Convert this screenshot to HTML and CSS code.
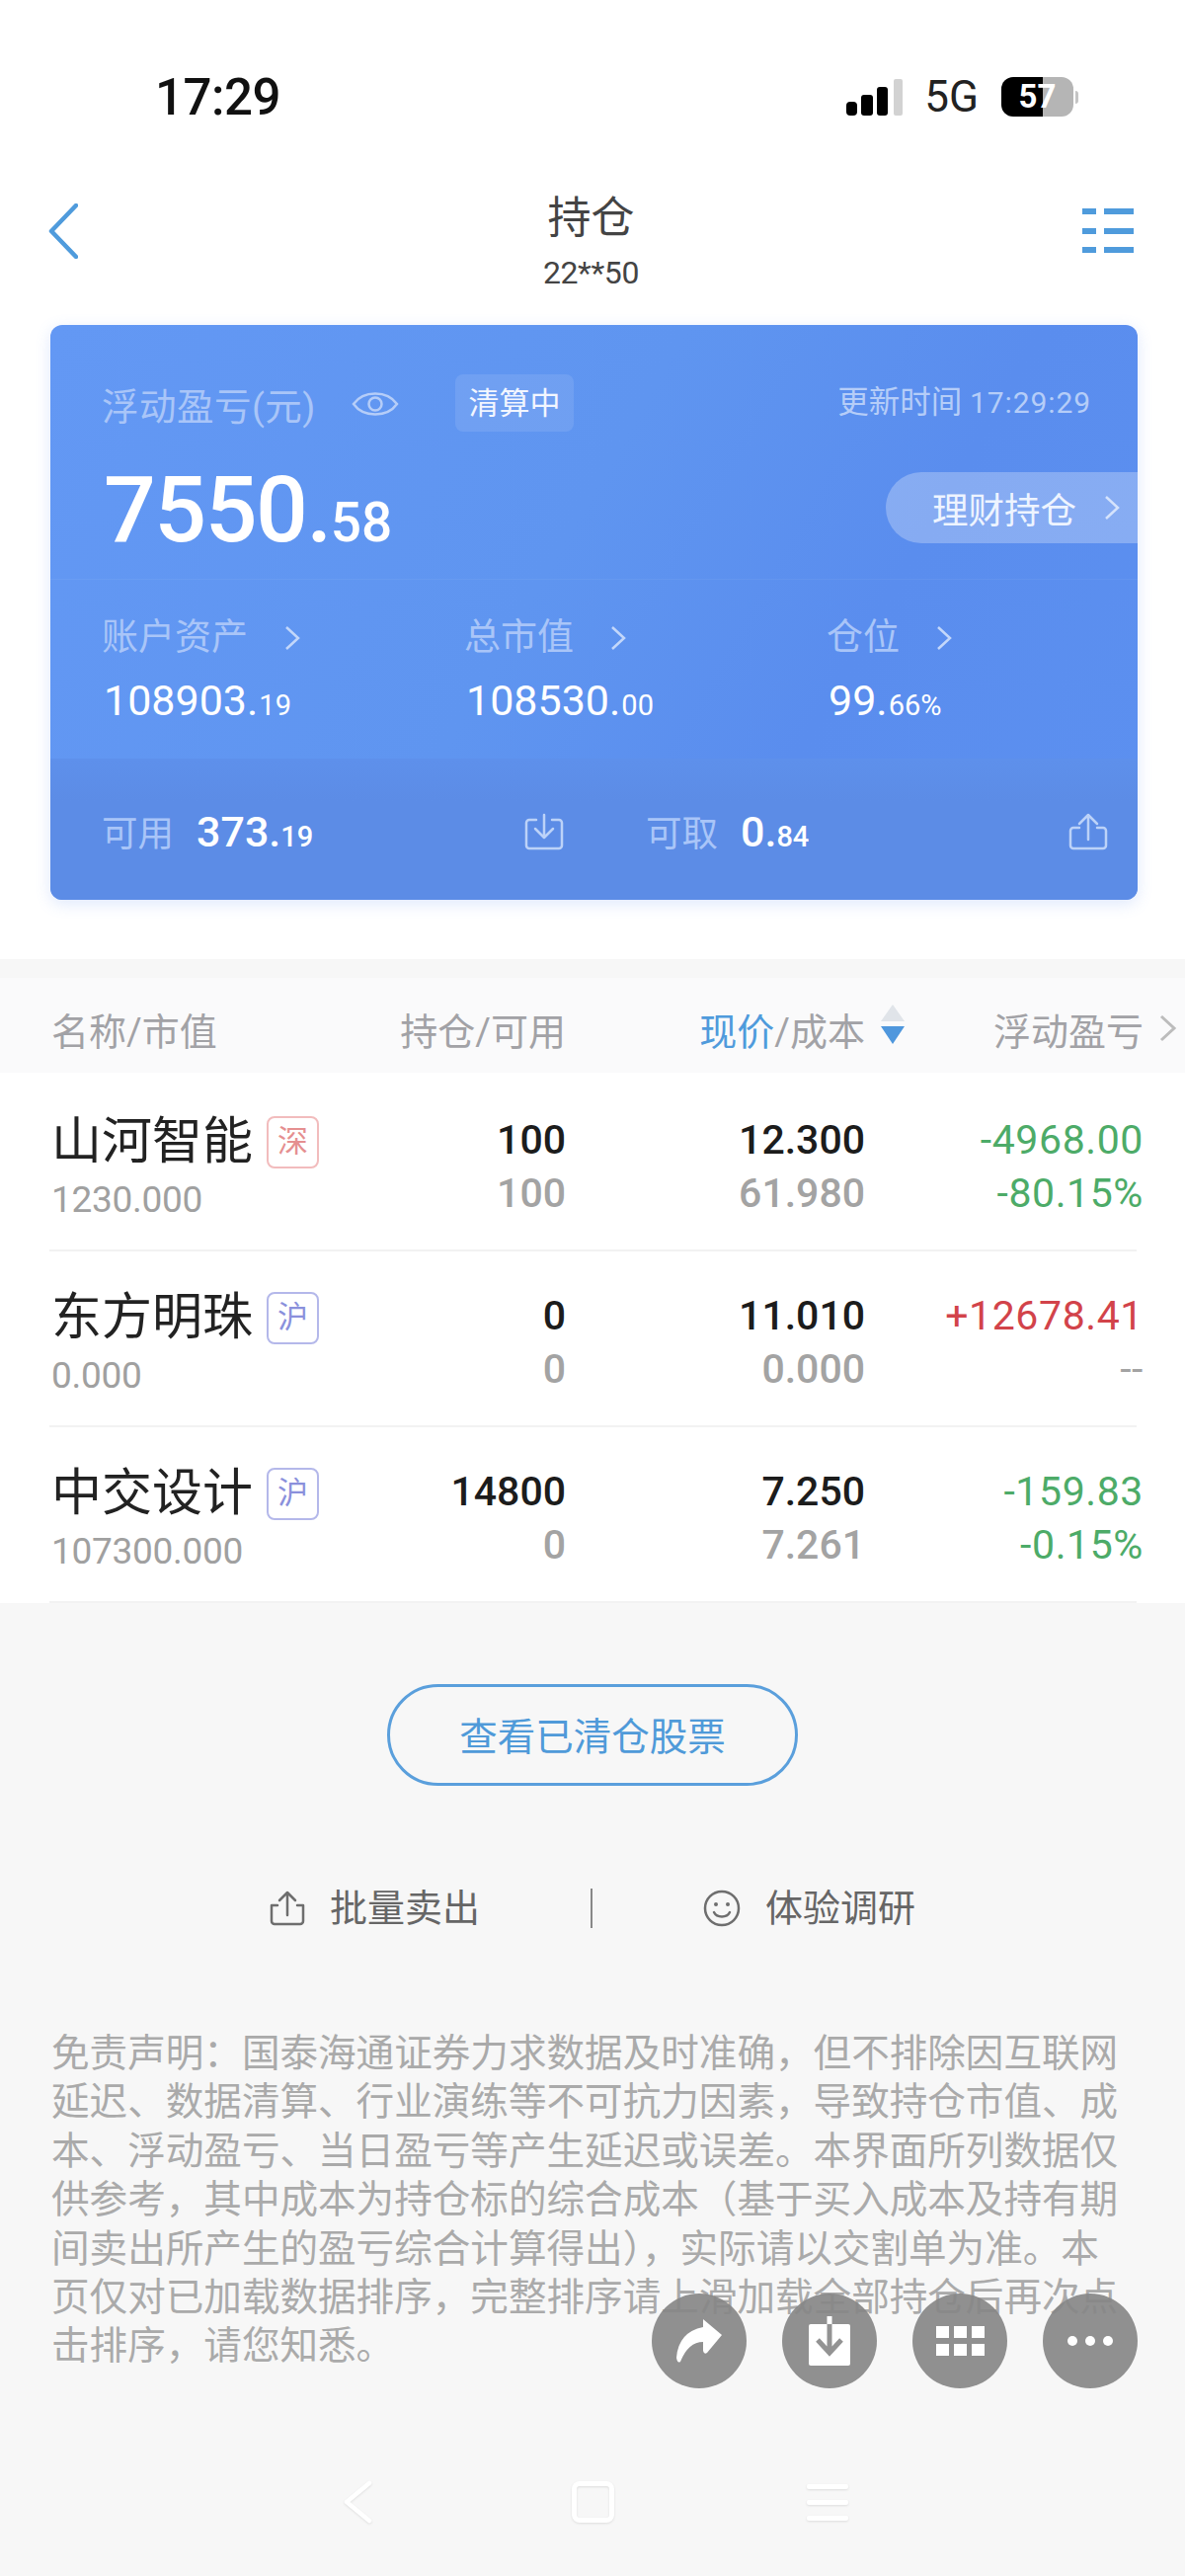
FILE: index.html
```html
<!DOCTYPE html>
<html lang="zh-CN">
<head>
<meta charset="utf-8">
<title>持仓</title>
<link rel="stylesheet" href="styles.css">
</head>
<body>
<header class="status">
  <span class="clock">17:29</span>
  <div class="status-right">
    <svg class="signal" viewBox="0 0 57 37" width="57" height="37"><rect x="0" y="23" width="11" height="14" rx="4" fill="#000"/><rect x="15" y="16" width="12" height="21" rx="3" fill="#000"/><rect x="31" y="8" width="11" height="29" rx="3" fill="#000"/><rect x="48" y="0" width="9" height="37" rx="2" fill="#d2d2d2"/></svg>
    <span class="net">5G</span>
    <div class="battery"><span class="battery-num">57</span></div>
    <span class="battery-nub"></span>
  </div>
</header>

<nav class="navbar">
  <svg class="nav-back" viewBox="0 0 30 56" width="30" height="56"><polyline points="28,2 3,28 28,54" fill="none" stroke="#4f9bdc" stroke-width="4.5" stroke-linecap="round" stroke-linejoin="round"/></svg>
  <div class="nav-title">
    <div class="title">持仓</div>
    <div class="account">22**50</div>
  </div>
  <svg class="nav-menu" viewBox="0 0 52 46" width="52" height="46"><g fill="#4f9bdc"><rect x="0" y="0" width="14" height="6"/><rect x="22" y="0" width="30" height="6"/><rect x="0" y="20" width="14" height="6"/><rect x="22" y="20" width="30" height="6"/><rect x="0" y="39" width="14" height="6"/><rect x="22" y="39" width="30" height="6"/></g></svg>
</nav>

<section class="card">
  <div class="card-main">
    <div class="card-top">
      <span class="label">浮动盈亏(元)</span>
      <svg class="eye" viewBox="0 0 48 34" width="48" height="34"><path d="M2 17C12 3 36 3 46 17C36 31 12 31 2 17Z" fill="none" stroke="#b5cdf8" stroke-width="2.5"/><circle cx="24" cy="17" r="6.5" fill="none" stroke="#b5cdf8" stroke-width="2.5"/></svg>
      <span class="clearing">清算中</span>
      <span class="updated">更新时间 <span class="updated-time">17:29:29</span></span>
    </div>
    <div class="card-hero">
      <div class="hero-num">7550.<small>58</small></div>
      <div class="wealth">理财持仓
        <svg viewBox="0 0 16 26" width="16" height="26"><polyline points="2,2 14,13 2,24" fill="none" stroke="#d5e3fc" stroke-width="2.5"/></svg>
      </div>
    </div>
    <div class="stats">
      <div class="stat">
        <div class="stat-label">账户资产<svg viewBox="0 0 16 26" width="16" height="26"><polyline points="2,2 14,13 2,24" fill="none" stroke="#c3d7fa" stroke-width="2.5"/></svg></div>
        <div class="stat-value">108903.<small>19</small></div>
      </div>
      <div class="stat">
        <div class="stat-label">总市值<svg viewBox="0 0 16 26" width="16" height="26"><polyline points="2,2 14,13 2,24" fill="none" stroke="#c3d7fa" stroke-width="2.5"/></svg></div>
        <div class="stat-value">108530.<small>00</small></div>
      </div>
      <div class="stat">
        <div class="stat-label">仓位<svg viewBox="0 0 16 26" width="16" height="26"><polyline points="2,2 14,13 2,24" fill="none" stroke="#c3d7fa" stroke-width="2.5"/></svg></div>
        <div class="stat-value">99.<small>66%</small></div>
      </div>
    </div>
  </div>
  <div class="card-foot">
    <div class="foot-half">
      <div class="foot-item"><span class="foot-label">可用</span><span class="foot-value">373.<small>19</small></span></div>
      <svg viewBox="0 0 40 38" width="40" height="38"><g fill="none" stroke="#bcd2f8" stroke-width="2.5" stroke-linecap="round" stroke-linejoin="round"><path d="M12 7H5a3 3 0 0 0-3 3v23a3 3 0 0 0 3 3h30a3 3 0 0 0 3-3V10a3 3 0 0 0-3-3h-7"/><path d="M20 2v22M11 16l9 9 9-9"/></g></svg>
    </div>
    <div class="foot-half">
      <div class="foot-item"><span class="foot-label">可取</span><span class="foot-value">0.<small>84</small></span></div>
      <svg viewBox="0 0 40 38" width="40" height="38"><g fill="none" stroke="#bcd2f8" stroke-width="2.5" stroke-linecap="round" stroke-linejoin="round"><path d="M11 15H5a3 3 0 0 0-3 3v15a3 3 0 0 0 3 3h30a3 3 0 0 0 3-3V18a3 3 0 0 0-3-3h-6"/><path d="M20 27V3M11 11l9-9 9 9"/></g></svg>
    </div>
  </div>
</section>

<div class="band"></div>

<section class="table">
  <div class="thead grid">
    <span>名称/市值</span>
    <span class="num">持仓/可用</span>
    <span class="num th-sort"><span class="th-active">现价</span>/成本
      <svg viewBox="0 0 24 40" width="24" height="40"><path d="M12 0L24 17H0Z" fill="#e0e4e9"/><path d="M12 40L24 22H0Z" fill="#4f97dd"/></svg>
    </span>
    <span class="num">浮动盈亏</span>
    <svg class="th-more" viewBox="0 0 18 28" width="18" height="28"><polyline points="2,2 15,14 2,26" fill="none" stroke="#bcbcbc" stroke-width="3"/></svg>
  </div>

  <div class="row grid">
    <div>
      <div class="name">山河智能<span class="badge badge-sz">深</span></div>
      <div class="sub">1230.000</div>
    </div>
    <div class="cell"><span class="v1">100</span><span class="v2">100</span></div>
    <div class="cell"><span class="v1">12.300</span><span class="v2">61.980</span></div>
    <div class="cell pnl pnl-down"><span>-4968.00</span><span>-80.15%</span></div>
  </div>

  <div class="row grid">
    <div>
      <div class="name">东方明珠<span class="badge badge-sh">沪</span></div>
      <div class="sub">0.000</div>
    </div>
    <div class="cell"><span class="v1">0</span><span class="v2">0</span></div>
    <div class="cell"><span class="v1">11.010</span><span class="v2">0.000</span></div>
    <div class="cell pnl"><span class="pnl-up">+12678.41</span><span class="v2">--</span></div>
  </div>

  <div class="row grid">
    <div>
      <div class="name">中交设计<span class="badge badge-sh">沪</span></div>
      <div class="sub">107300.000</div>
    </div>
    <div class="cell"><span class="v1">14800</span><span class="v2">0</span></div>
    <div class="cell"><span class="v1">7.250</span><span class="v2">7.261</span></div>
    <div class="cell pnl pnl-down"><span>-159.83</span><span>-0.15%</span></div>
  </div>
</section>

<section class="lower">
  <div class="cleared">查看已清仓股票</div>
  <div class="actions">
    <div class="action">
      <svg viewBox="0 0 36 36" width="36" height="36"><g fill="none" stroke="#6e6e6e" stroke-width="2.5" stroke-linecap="round" stroke-linejoin="round"><path d="M8 15H2v16a3 3 0 0 0 3 3h26a3 3 0 0 0 3-3V15h-6"/><path d="M18 25V2M10 10l8-8 8 8"/></g></svg>
      <span>批量卖出</span>
    </div>
    <span class="divider"></span>
    <div class="action">
      <svg viewBox="0 0 38 38" width="38" height="38"><g fill="none" stroke="#6e6e6e" stroke-width="2.5" stroke-linecap="round"><circle cx="19" cy="19" r="17"/><path d="M11 23c3 6 13 6 16 0"/></g><circle cx="13" cy="15" r="2" fill="#6e6e6e"/><circle cx="25" cy="15" r="2" fill="#6e6e6e"/></svg>
      <span>体验调研</span>
    </div>
  </div>
  <p class="disclaimer">免责声明：国泰海通证券力求数据及时准确，但不排除因互联网延迟、数据清算、行业演练等不可抗力因素，导致持仓市值、成本、浮动盈亏、当日盈亏等产生延迟或误差。本界面所列数据仅供参考，其中成本为持仓标的综合成本（基于买入成本及持有期间卖出所产生的盈亏综合计算得出），实际请以交割单为准。本页仅对已加载数据排序，完整排序请上滑加载全部持仓后再次点击排序，请您知悉。</p>
  <div class="sysnav">
    <div class="sysnav-cell"><svg viewBox="0 0 30 44" width="30" height="44"><polyline points="27,3 4,22 27,41" fill="none" stroke="#fff" stroke-width="4.5" stroke-linecap="round" stroke-linejoin="round"/></svg></div>
    <div class="sysnav-cell"><span class="sys-square"></span></div>
    <div class="sysnav-cell"><svg viewBox="0 0 42 40" width="42" height="40"><g fill="#fff"><rect x="0" y="2" width="42" height="5" rx="2"/><rect x="0" y="18" width="42" height="5" rx="2"/><rect x="0" y="34" width="42" height="5" rx="2"/></g></svg></div>
  </div>
</section>

<div class="float-bar">
  <div class="float-btn"><svg viewBox="0 0 46 46" width="46" height="46"><path d="M27 1L46 17L31 35Q28 37 27 33L27 24Q12 24 4 44Q1 46 0 40Q2 14 27 9Z" fill="#fff"/></svg></div>
  <div class="float-btn"><svg viewBox="0 0 42 50" width="42" height="50"><rect x="0" y="8" width="42" height="42" rx="2" fill="#fff"/><rect x="18.500" y="0" width="5" height="8" fill="#fff"/><path d="M21 8V36M9 24L21 37L33 24" fill="none" stroke="#939393" stroke-width="5"/></svg></div>
  <div class="float-btn"><svg viewBox="0 0 49 30" width="49" height="30"><g fill="#fff"><rect x="0" y="0" width="13" height="12"/><rect x="18" y="0" width="13" height="12"/><rect x="36" y="0" width="13" height="12"/><rect x="0" y="18" width="13" height="12"/><rect x="18" y="18" width="13" height="12"/><rect x="36" y="18" width="13" height="12"/></g></svg></div>
  <div class="float-btn"><svg viewBox="0 0 46 10" width="46" height="10"><g fill="#fff"><circle cx="5" cy="5" r="5"/><circle cx="23" cy="5" r="5"/><circle cx="41" cy="5" r="5"/></g></svg></div>
</div>
</body>
</html>
```
FILE: styles.css
```css
* { box-sizing: border-box; }
html, body { margin: 0; padding: 0; }
body {
  position: relative;
  width: 1200px;
  height: 2608px;
  overflow: hidden;
  background: #fff;
  font-family: Roboto, "Noto Sans CJK SC", sans-serif;
  color: #222;
}
small { font-size: inherit; }

/* status bar */
.status {
  height: 196px;
  display: flex;
  justify-content: space-between;
  align-items: center;
  padding: 0 108px 0 157px;
}
.clock { font-size: 51px; font-weight: 500; color: #111; letter-spacing: -0.5px; }
.status-right { display: flex; align-items: center; }
.signal { margin-right: 22px; }
.net { font-size: 44px; color: #222; margin-right: 23px; }
.battery {
  width: 73px;
  height: 40px;
  border-radius: 12px;
  background: linear-gradient(90deg, #000 0, #000 57%, #b5b5b5 57%, #b5b5b5 100%);
  display: flex;
  align-items: center;
  justify-content: center;
}
.battery-num { font-size: 33px; font-weight: 700; color: #fff; line-height: 40px; }
.battery-nub { width: 3px; height: 13px; margin-left: 2px; border-radius: 0 3px 3px 0; background: #c4c4c4; }

/* nav */
.navbar {
  height: 133px;
  display: grid;
  grid-template-columns: 1fr auto 1fr;
  padding: 0 52px 0 49px;
  align-items: start;
}
.nav-back { margin-top: 10px; }
.nav-menu { justify-self: end; margin-top: 15px; }
.nav-title { text-align: center; }
.title { font-size: 44px; line-height: 50px; color: #444; }
.account { font-size: 32px; line-height: 34px; margin-top: 13px; color: #444; letter-spacing: -.4px; }

/* card */
.card {
  margin: 0 48px 0 51px;
  height: 582px;
  border-radius: 12px;
  background: linear-gradient(120deg, #6398f4 0%, #5f95f0 45%, #5a8dee 70%, #5c90f0 100%);
  box-shadow: 0 4px 16px rgba(90, 140, 240, .2);
  color: #fff;
  display: flex;
  flex-direction: column;
}
.card-main { height: 439px; padding-top: 50px; }
.card-top {
  height: 58px;
  padding: 0 47px 0 52px;
  display: flex;
  align-items: center;
}
.label { font-size: 37.5px; color: #a9c5f8; letter-spacing: .5px; }
.eye { margin-left: 36px; transform: translateY(1px); }
.clearing {
  margin-left: 57px;
  width: 120px;
  height: 58px;
  line-height: 60px;
  text-align: center;
  font-size: 31px;
  background: rgba(255, 255, 255, .1);
  border-radius: 8px;
  color: #f2f6ff;
}
.updated { margin-left: auto; font-size: 31.5px; line-height: 60px; color: #b5cdf8; }
.updated-time { font-size: 30px; letter-spacing: .9px; }
.card-hero {
  margin-top: 41px;
  height: 72px;
  padding-left: 54px;
  display: flex;
  justify-content: space-between;
  align-items: center;
}
.hero-num { font-size: 93px; line-height: 72px; font-weight: 500; letter-spacing: -1.5px; white-space: nowrap; padding-top: 18px; }
.hero-num small { font-size: 55px; font-weight: 500; letter-spacing: 0; }
.wealth {
  width: 255px;
  height: 72px;
  border-radius: 36px 0 0 36px;
  background: rgba(255, 255, 255, .27);
  padding-left: 47px;
  font-size: 36.500px;
  color: #eef4ff;
  display: flex;
  align-items: center;
  gap: 28px;
  white-space: nowrap;
}
.stats {
  margin-top: 36px;
  border-top: 1px solid rgba(255, 255, 255, .05);
  padding: 34px 0 0 52px;
  display: grid;
  grid-template-columns: repeat(3, 367px);
}
.stat-label { font-size: 37px; line-height: 50px; color: #a9c5f8; display: flex; align-items: center; gap: 37px; }
.stat-value { margin-top: 10px; font-size: 43px; line-height: 56px; padding-left: 2px; font-weight: 400; }
.stat-value small { font-size: 29px; font-weight: 400; margin-left: 1px; }
.card-foot {
  height: 143px;
  padding: 4px 30px 0 52px;
  border-radius: 0 0 12px 12px;
  background: linear-gradient(#5e90eb, #5c8ce6 30%);
  display: flex;
  align-items: center;
  gap: 83px;
}
.foot-half { width: 469px; display: flex; align-items: center; justify-content: space-between; }
.foot-item { display: flex; align-items: center; gap: 23px; }
.foot-label { font-size: 36.500px; color: #a9c5f8; }
.foot-value { font-size: 43px; font-weight: 500; }
.foot-value small { font-size: 29px; font-weight: 500; }

/* table */
.band { height: 19px; margin-top: 60px; background: #f7f7f7; }
.grid {
  display: grid;
  grid-template-columns: 302px 219px 303px 282px 42px;
  padding-left: 52px;
}
.thead {
  height: 96px;
  margin-bottom: 3px;
  padding-top: 6px;
  align-items: center;
  background: #fafafb;
  font-size: 38px;
  color: #a2a2a6;
}
.num { text-align: right; white-space: nowrap; }
.th-sort { position: relative; }
.th-sort svg { position: absolute; left: 100%; top: 3px; margin-left: 16px; }
.th-active { color: #4f9bdc; }
.th-more { margin-left: 16px; }
.row {
  height: 178px;
  padding-top: 38px;
  background: linear-gradient(#f2f2f2, #f2f2f2) 50px 100% / 1101px 2px no-repeat;
}
.name {
  height: 58px;
  font-size: 51px;
  line-height: 58px;
  color: #222;
  display: flex;
  align-items: center;
  white-space: nowrap;
}
.badge {
  width: 53px;
  height: 53px;
  margin-left: 14px;
  border-radius: 8px;
  border: 2px solid;
  font-size: 31px;
  line-height: 48px;
  text-align: center;
}
.badge-sz { color: #e58f90; border-color: #f2bcbd; }
.badge-sh { color: #8a90dc; border-color: #b4b8ea; }
.sub { font-size: 37px; line-height: 48px; margin-top: 6px; color: #a0a0a0; letter-spacing: -.3px; }
.cell { display: flex; flex-direction: column; align-items: flex-end; font-size: 41px; line-height: 54px; font-weight: 500; }
.pnl { font-weight: 400; letter-spacing: .6px; }
.v1 { color: #1c1c1c; }
.v2 { color: #a3a3a3; }
.pnl-down { color: #4dab68; }
.pnl-up { color: #d2434a; }

/* lower */
.lower { height: 985px; background: #f7f7f7; padding-top: 82px; }
.cleared {
  width: 416px;
  height: 103px;
  margin: 0 auto;
  border: 3px solid #5a9fdc;
  border-radius: 52px;
  font-size: 38.500px;
  line-height: 102px;
  text-align: center;
  color: #4f9ad9;
}
.actions {
  margin-top: 104px;
  height: 40px;
  display: flex;
  justify-content: center;
  align-items: center;
  gap: 112px;
}
.action { display: flex; align-items: center; gap: 25px; font-size: 38px; line-height: 44px; color: #666; white-space: nowrap; }
.divider { width: 2px; height: 40px; background: #888; }
.disclaimer {
  margin: 102px 0 0 52px;
  width: 1090px;
  font-size: 38.6px;
  line-height: 49.4px;
  color: #aaa;
}
.sysnav {
  margin-top: 111px;
  display: flex;
  justify-content: center;
  gap: 178px;
}
.sysnav-cell {
  width: 60px;
  height: 44px;
  display: flex;
  justify-content: center;
  align-items: center;
  filter: drop-shadow(0 1px 1px rgba(0, 0, 0, .1));
}
.sys-square { width: 43px; height: 42px; border: 5px solid #fff; border-radius: 8px; }

/* floating buttons */
.float-bar { position: absolute; top: 2322px; right: 48px; display: flex; gap: 36px; }
.float-btn {
  width: 96px;
  height: 96px;
  border-radius: 50%;
  background: rgba(135, 135, 135, .92);
  display: flex;
  align-items: center;
  justify-content: center;
}
```
